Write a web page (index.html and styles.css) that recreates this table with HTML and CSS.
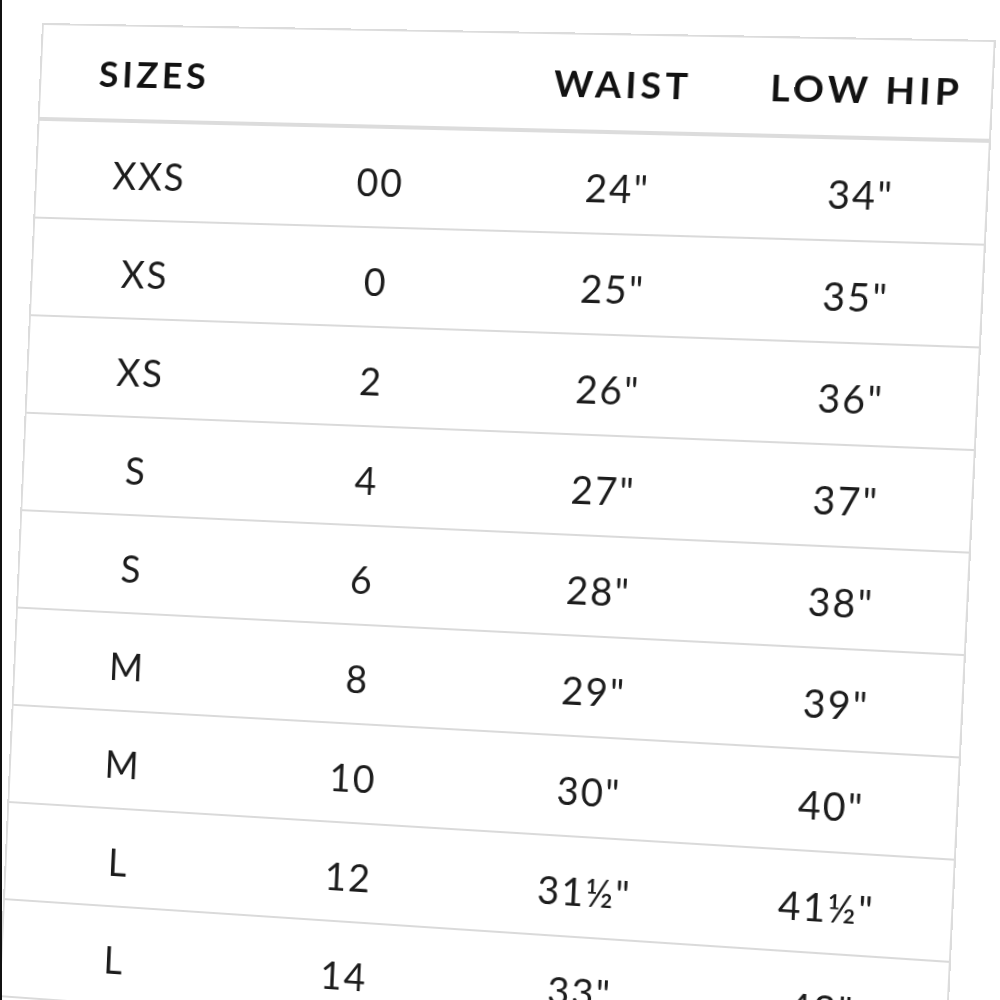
FILE: index.html
```html
<!DOCTYPE html>
<html lang="en">
<head>
<meta charset="utf-8">
<title>Size chart</title>
<link rel="stylesheet" href="styles.css">
</head>
<body>
<div class="chart">
  <div class="row head">
    <div class="cell">SIZES</div>
    <div class="cell"></div>
    <div class="cell">WAIST</div>
    <div class="cell">LOW HIP</div>
  </div>
  <div class="row"><div class="cell">XXS</div><div class="cell">00</div><div class="cell">24"</div><div class="cell">34"</div></div>
  <div class="row"><div class="cell">XS</div><div class="cell">0</div><div class="cell">25"</div><div class="cell">35"</div></div>
  <div class="row"><div class="cell">XS</div><div class="cell">2</div><div class="cell">26"</div><div class="cell">36"</div></div>
  <div class="row"><div class="cell">S</div><div class="cell">4</div><div class="cell">27"</div><div class="cell">37"</div></div>
  <div class="row"><div class="cell">S</div><div class="cell">6</div><div class="cell">28"</div><div class="cell">38"</div></div>
  <div class="row"><div class="cell">M</div><div class="cell">8</div><div class="cell">29"</div><div class="cell">39"</div></div>
  <div class="row"><div class="cell">M</div><div class="cell">10</div><div class="cell">30"</div><div class="cell">40"</div></div>
  <div class="row"><div class="cell">L</div><div class="cell">12</div><div class="cell">31½"</div><div class="cell">41½"</div></div>
  <div class="row"><div class="cell">L</div><div class="cell">14</div><div class="cell">33"</div><div class="cell">43"</div></div>
  <div class="row"><div class="cell">XL</div><div class="cell">16</div><div class="cell">34½"</div><div class="cell">44½"</div></div>
</div>
</body>
</html>
```

FILE: styles.css
```css
html, body {
  margin: 0;
  padding: 0;
  overflow: hidden;
}

body {
  width: 998px;
  height: 1000px;
  background: #ffffff;
  border-left: 2px solid #111111;
  font-family: "Lato", "Open Sans", "Liberation Sans", sans-serif;
  color: #1c1c1c;
}

.chart {
  width: 954px;
  box-sizing: border-box;
  border: 2px solid #dcdcdc;
  border-bottom: none;
  transform-origin: 0 0;
  transform: matrix3d(0.947686, 0.015719, 0, -0.000052523,
                      -0.04332, 0.978395, 0, 0.0000043896,
                      0, 0, 1, 0,
                      40, 23, 0, 1);
}

.row {
  display: grid;
  grid-template-columns: repeat(4, 1fr);
  height: 98px;
  border-bottom: 2px solid #dadada;
}

.row.head {
  height: 94px;
  border-bottom: 4px solid #dcdcdc;
}

.cell {
  display: flex;
  align-items: center;
  justify-content: center;
  padding-top: 7px;
  padding-right: 3px;
  font-size: 38px;
  letter-spacing: 2px;
  font-weight: 400;
}

.head .cell {
  padding-top: 1px;
  padding-right: 2px;
  font-size: 37px;
  letter-spacing: 4px;
  font-weight: 700;
  color: #121212;
}
```
